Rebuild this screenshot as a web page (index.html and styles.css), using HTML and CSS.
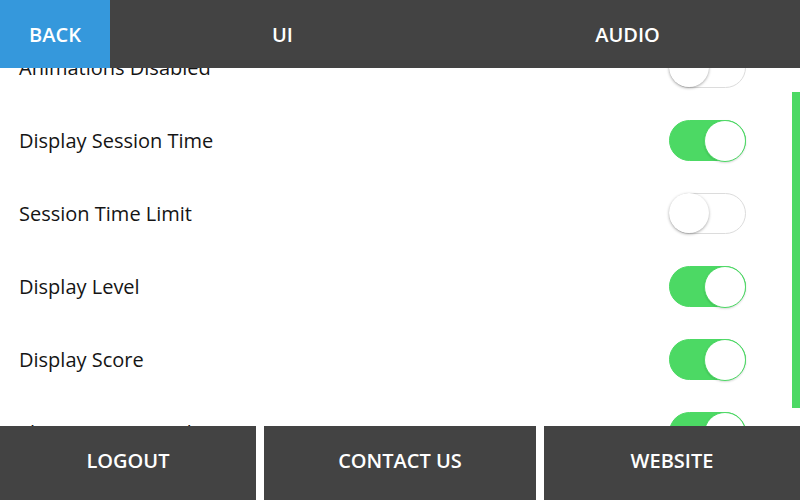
FILE: index.html
```html
<!DOCTYPE html>
<html>
<head>
<meta charset="utf-8">
<link rel="stylesheet" href="styles.css">
</head>
<body>
<div class="app">
  <header class="topbar">
    <div class="back">BACK</div>
    <div class="tab">UI</div>
    <div class="tab">AUDIO</div>
  </header>
  <main class="content">
    <ul class="list">
      <li class="row"><span>Animations Disabled</span><span class="toggle"></span></li>
      <li class="row"><span>Display Session Time</span><span class="toggle on"></span></li>
      <li class="row"><span>Session Time Limit</span><span class="toggle"></span></li>
      <li class="row"><span>Display Level</span><span class="toggle on"></span></li>
      <li class="row"><span>Display Score</span><span class="toggle on"></span></li>
      <li class="row"><span>Show Progress Indicator</span><span class="toggle on"></span></li>
    </ul>
    <div class="scrollbar"></div>
  </main>
  <footer class="bottombar">
    <div class="fbtn">LOGOUT</div>
    <div class="fbtn">CONTACT US</div>
    <div class="fbtn">WEBSITE</div>
  </footer>
</div>
</body>
</html>
```
FILE: styles.css
```css
* { box-sizing: border-box; }
html, body { margin: 0; padding: 0; background: #fff; }
body { font-family: "Open Sans", "Liberation Sans", sans-serif; }
.app { width: 800px; height: 500px; display: flex; flex-direction: column; overflow: hidden; position: relative; }
.topbar { height: 68px; flex: none; display: flex; background: #434343; color: #fff; font-size: 20px; font-weight: 600; position: relative; z-index: 2; }
.back { width: 110px; background: #3598dc; display: flex; align-items: center; justify-content: center; }
.tab { flex: 1; display: flex; align-items: center; justify-content: center; }
.content { flex: 1; overflow: hidden; position: relative; }
.list { list-style: none; margin: -37.5px 0 0 0; padding: 0; }
.row { height: 73px; display: flex; align-items: center; justify-content: space-between; padding: 0 54px 0 19px; font-size: 20px; color: #151515; }
.toggle { width: 77px; height: 41px; border-radius: 21px; border: 1.5px solid #dcdcdc; background: #fff; position: relative; }
.toggle::after { content: ""; position: absolute; top: -1px; left: -1px; width: 40px; height: 40px; border-radius: 50%; background: #fff; box-shadow: 0 1px 3px rgba(0,0,0,0.35); }
.toggle.on { background: #4cd964; border-color: #4cd964; }
.toggle.on::after { left: auto; right: -1px; box-shadow: 0 1px 2px rgba(0,0,0,0.15); border: 1px solid #4cd964; }
.scrollbar { position: absolute; right: 0; top: 24px; width: 8px; height: 316px; background: #4cd964; }
.bottombar { height: 74px; flex: none; display: grid; grid-template-columns: 256px 1fr 256px; gap: 8px; color: #fff; font-size: 20px; font-weight: 600; position: relative; z-index: 2; }
.fbtn { background: #434343; display: flex; align-items: center; justify-content: center; padding-bottom: 5px; }
```
